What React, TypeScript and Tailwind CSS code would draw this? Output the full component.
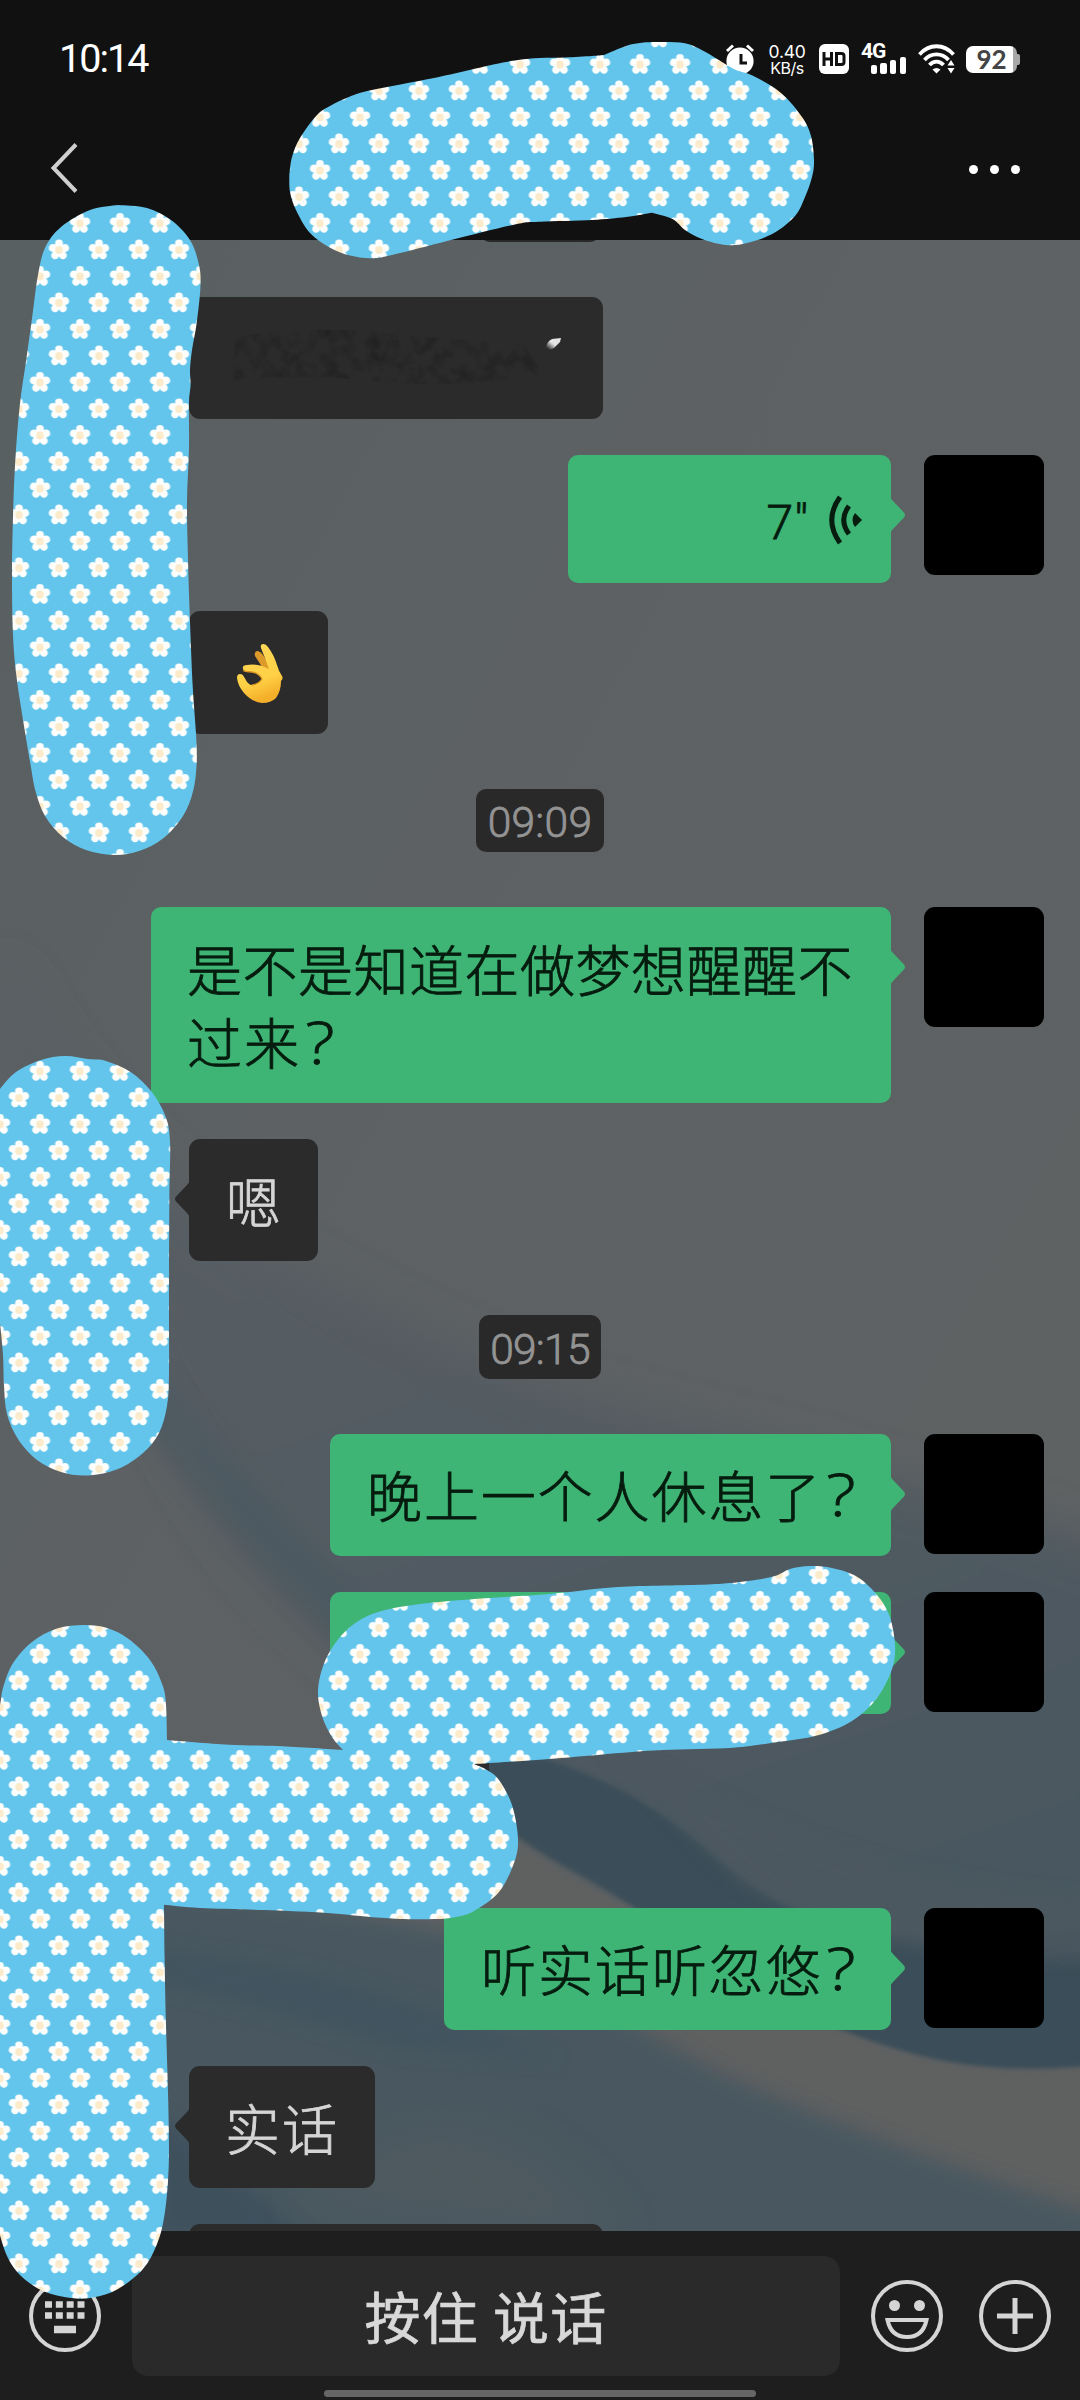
import type { ReactNode } from "react";

type Pt = [number, number];

/** Smooth closed outline through a list of segments; the joints between segments stay sharp. */
function outline(segments: Pt[][]): string {
  let d = `M${segments[0][0].join(" ")}`;
  segments.forEach((p, s) => {
    if (s > 0) d += ` L${p[0].join(" ")}`;
    for (let i = 0; i < p.length - 1; i++) {
      const a = p[Math.max(i - 1, 0)];
      const b = p[i];
      const c = p[i + 1];
      const e = p[Math.min(i + 2, p.length - 1)];
      const r = (n: number) => n.toFixed(1);
      d += ` C${r(b[0] + (c[0] - a[0]) / 6)} ${r(b[1] + (c[1] - a[1]) / 6)} ${r(c[0] - (e[0] - b[0]) / 6)} ${r(c[1] - (e[1] - b[1]) / 6)} ${c[0]} ${c[1]}`;
    }
  });
  return d + "Z";
}

const titleStroke: Pt[][] = [
  [[289.3, 175], [292, 157], [300, 138], [317, 115], [330, 106], [350, 96.5], [372, 90], [434, 78], [496, 64], [518, 60], [540, 58], [565, 57.5], [592, 56], [604, 55]],
  [[604, 55], [626, 46], [640, 43], [657, 42], [685, 43.3], [705, 51.7], [722, 62], [736, 70], [753.5, 76], [781, 93], [802, 117], [811, 136], [814, 160], [812, 177], [805, 197], [795, 216], [774, 233], [747, 243], [726, 245], [702, 239], [685, 230], [672.6, 219], [652, 212.7]],
  [[652, 212.7], [626, 217], [592, 220], [540, 221.7], [517, 224], [455, 239], [392, 255], [371, 258.2], [350, 255.5], [330.6, 248], [310, 233], [296, 210], [290, 192], [289.3, 175]],
];

const upperLeftStroke: Pt[][] = [
  [[118, 205], [90, 210], [61, 227], [45, 248], [38, 275], [32.6, 314], [26.5, 358], [19.6, 407], [15, 466], [12.7, 528], [12, 582], [13, 635], [16.3, 675], [22.4, 716], [30.6, 765], [35.5, 791], [45, 816], [63, 837], [86, 850], [114, 855], [139, 851], [163, 838.5], [183, 816], [193, 791.6], [196.7, 763], [196, 733.6], [192.6, 684.5], [190, 622], [188, 559.5], [187, 501], [189, 448], [189, 403], [190.6, 385], [190, 370], [192, 350], [196.7, 323], [200.4, 287], [199, 265], [190, 240], [171, 220], [147, 208], [118, 205]],
];

const middleLeftStroke: Pt[][] = [
  [[-8, 1100], [0, 1089], [16, 1072], [41, 1060], [65, 1056], [88, 1059], [106, 1061], [130.6, 1072], [151, 1091], [165, 1115], [170, 1141], [169.4, 1196], [169, 1290], [169, 1374], [167, 1406], [159, 1433], [143, 1453], [118, 1469], [88, 1475.5], [61, 1472], [37, 1460], [18, 1439], [7, 1414], [4, 1386], [3, 1354.5], [0, 1323]],
  [[-8, 1310], [-8, 1100]],
];

const lowerStroke: Pt[][] = [
  [[-8, 1730], [0, 1705], [3, 1688], [12.5, 1664], [32, 1642], [57, 1628.6], [84, 1625], [107, 1628], [128.6, 1639], [150, 1660], [162.5, 1685], [166, 1705], [167, 1740]],
  [[167, 1740], [228.6, 1744.7], [278.6, 1746], [343, 1750]],
  [[343, 1750], [332, 1737], [322, 1716], [318, 1690], [325, 1661], [340, 1637], [360, 1620], [389.5, 1609], [449, 1601], [549, 1594], [618, 1587], [708, 1584.5], [748, 1581], [775, 1576], [790, 1569], [810, 1566], [832, 1568], [857, 1576.7], [877, 1595], [889.5, 1616], [895, 1645], [892, 1669], [877, 1698], [852, 1721], [817, 1735.5], [777.5, 1742], [733, 1747.8], [663, 1750], [623, 1752.7], [549, 1759], [474, 1764]],
  [[474, 1764], [487, 1770], [499, 1780], [512, 1805], [518, 1839], [514, 1863], [499, 1892], [474, 1911], [456, 1917], [437.5, 1919], [400, 1919], [368, 1916.8], [321, 1912.6], [264, 1910], [200, 1908], [164, 1904.8]],
  [[164, 1904.8], [164.6, 1956.6], [166, 2024.6], [168, 2092.5], [169, 2145], [168, 2181.5], [164, 2218], [157, 2244], [143, 2269], [118, 2289], [93, 2297.6], [71, 2298], [43, 2291], [21, 2276], [7, 2256], [-3, 2225]],
  [[-8, 2210], [-8, 1730]],
];

function Flower({ x, y }: { x: number; y: number }) {
  return (
    <g transform={`translate(${x} ${y})`}>
      {[0, 72, 144, 216, 288].map((a) => (
        <ellipse key={a} cx="0" cy="-6.200" rx="3.900" ry="4.200" fill="#fefffc" transform={`rotate(${a})`} />
      ))}
      <circle r="3.900" fill="#fcebcb" />
    </g>
  );
}

function Stickers() {
  return (
    <svg className="pointer-events-none absolute inset-0" width="1080" height="2400" viewBox="0 0 1080 2400">
      <defs>
        <pattern id="daisies" width="40" height="53" patternUnits="userSpaceOnUse" patternTransform="translate(9.5 0)">
          <rect width="40" height="53" fill="#64c5ec" />
          <Flower x={30.5} y={11.5} />
          <Flower x={-9.5} y={11.5} />
          <Flower x={9.5} y={38} />
          <Flower x={49.5} y={38} />
        </pattern>
      </defs>
      {[titleStroke, upperLeftStroke, middleLeftStroke, lowerStroke].map((s, i) => (
        <path key={i} d={outline(s)} fill="url(#daisies)" />
      ))}
    </svg>
  );
}

function Wallpaper() {
  return (
    <svg className="absolute inset-0" width="1080" height="1991" viewBox="0 240 1080 1991">
      <defs>
        <linearGradient id="sky" x1="0" y1="0" x2="1" y2="1">
          <stop offset="0" stopColor="#586062" />
          <stop offset="0.35" stopColor="#5d6163" />
          <stop offset="1" stopColor="#606263" />
        </linearGradient>
        <linearGradient id="ridge" x1="0" y1="0" x2="0.35" y2="1">
          <stop offset="0" stopColor="#5b6063" />
          <stop offset="0.5" stopColor="#535b62" />
          <stop offset="1" stopColor="#4a5860" />
        </linearGradient>
        <filter id="b24" x="-20%" y="-20%" width="140%" height="140%"><feGaussianBlur stdDeviation="24" /></filter>
        <filter id="b10" x="-20%" y="-20%" width="140%" height="140%"><feGaussianBlur stdDeviation="9" /></filter>
        <filter id="b2"><feGaussianBlur stdDeviation="2.5" /></filter>
      </defs>
      <rect y="240" width="1080" height="1991" fill="url(#sky)" />
      <path d="M0 960 C120 1200 330 1290 480 1360 S800 1440 1140 1560 L1140 2060 C900 2060 760 1980 640 1900 S380 1680 300 1610 S100 1330 0 1020Z" fill="url(#ridge)" filter="url(#b24)" />
      <path d="M160 1370 C260 1500 380 1620 520 1730 L540 1800 C400 1720 220 1540 140 1420Z" fill="#4a5861" opacity="0.6" filter="url(#b10)" />
      <path d="M480 1745 C640 1770 700 1850 760 1890 S960 1960 1100 1925 L1100 2066 C980 2078 920 2060 840 2030 S700 1950 630 1905 S520 1850 480 1800Z" fill="#3b4e59" filter="url(#b2)" />
      <path d="M600 1740 C760 1830 900 1890 1100 1900 L1100 1960 C960 1960 860 1950 740 1880Z" fill="#4d5961" opacity="0.8" filter="url(#b10)" />
      <path d="M440 1840 L500 1835 Q570 1880 630 1908 C780 2010 900 2090 1100 2066 L1100 2230 C900 2160 700 2080 440 2010Z" fill="#5e6061" filter="url(#b2)" />
      <path d="M-20 1860 C160 1890 330 1905 440 1930 S640 2040 760 2090 S960 2170 1100 2215 L1100 2260 L-20 2260Z" fill="#4a5860" filter="url(#b10)" />
      <path d="M150 1950 C300 1960 420 2000 560 2060 L400 2050 C300 2020 220 1995 150 1985Z" fill="#40525e" opacity="0.7" filter="url(#b10)" />
      <path d="M150 2110 C220 2150 260 2200 310 2240 L150 2240Z" fill="#3e505d" opacity="0.8" filter="url(#b10)" />
      <path d="M300 2200 C420 2080 520 2120 620 2240Z" fill="#535c61" opacity="0.6" filter="url(#b24)" />
    </svg>
  );
}

function StatusBar() {
  return (
    <div className="flex h-[118px] items-center justify-between pl-[59px] pr-[60px] text-white">
      <div className="font-[Roboto] text-[39.5px] leading-none tracking-[-2px]">10:14</div>
      <div className="flex items-center">
        <svg width="30" height="32" viewBox="0 0 30 32" className="mr-[13px]">
          <circle cx="15" cy="18" r="13.6" fill="#fff" />
          <path d="M2 8 L8 2.5 M22 2.5 L28 8" stroke="#fff" strokeWidth="3" />
          <path d="M16 11 V20 H22" stroke="#111" strokeWidth="3" fill="none" />
        </svg>
        <div className="mr-[13px] w-[38px] text-center font-[Inter]">
          <div className="text-[17.5px] leading-[17px] tracking-[-0.3px]">0.40</div>
          <div className="text-[16px] leading-[16px] tracking-[-0.5px]">KB/s</div>
        </div>
        <div className="flex h-[30px] w-[30px] items-center justify-center rounded-[6px] bg-white">
          <svg width="24" height="14" viewBox="0 0 24 14" fill="none" stroke="#111" strokeWidth="3">
            <path d="M2 0V14M9.5 0V14M2 7H9.5M14.5 1.5V12.5M13 1.5H19.5Q22 1.5 22 4V10Q22 12.5 19.5 12.5H13" />
          </svg>
        </div>
        <div className="relative ml-[12px] h-[30px] w-[46px]">
          <div className="absolute -top-px left-0 font-[Roboto] text-[21px] leading-[17px] font-bold tracking-[-1px]">4G</div>
          <div className="absolute right-px bottom-0 flex items-end gap-[3.2px]">
            <i className="h-[9px] w-[6.4px] rounded-[2px] bg-white" />
            <i className="h-[11px] w-[6.4px] rounded-[2px] bg-white" />
            <i className="h-[14px] w-[6.4px] rounded-[2px] bg-white" />
            <i className="h-[17px] w-[6.4px] rounded-[2px] bg-white" />
          </div>
        </div>
        <svg width="38" height="30" viewBox="0 0 38 30" className="ml-[11px]" fill="none" stroke="#fff" strokeWidth="3.8">
          <path d="M1.5 10.5 C11 -0.5 26 -0.5 35.500 10.5" />
          <path d="M6.500 16 C13 8.500 24 8.500 30.500 16" />
          <path d="M11.500 21 C15.500 16.500 21.500 16.500 25.500 21" />
          <path d="M18.500 29.500 L14.500 25.500 Q18.500 22.500 22.500 25.500Z" fill="#fff" stroke="none" />
          <path d="M29.500 21.500 L33 16 L36.500 21.500Z M29.500 24 L33 29.500 L36.500 24Z" fill="#fff" stroke="none" />
        </svg>
        <div className="ml-[10px] flex items-center">
          <div className="flex h-[27px] w-[51px] items-center justify-center rounded-[7px] bg-[linear-gradient(90deg,#fff_0_47px,#a8a8a8_47px)] font-[Lato] text-[26px] leading-none font-bold text-[#444]">92</div>
          <div className="h-[11px] w-[3px] rounded-r-[2px] bg-[#a8a8a8]" />
        </div>
      </div>
    </div>
  );
}

function TimePill({ children, className }: { children?: ReactNode; className: string }) {
  return (
    <div className={`flex shrink-0 items-center justify-center self-center rounded-[10px] bg-[#292929] pt-[6px] font-[Roboto] text-[42.5px] leading-none font-light text-[#939393] [-webkit-text-stroke:0.8px] ${className}`}>
      {children}
    </div>
  );
}

function Sent({ children, className }: { children?: ReactNode; className: string }) {
  return (
    <div className="flex shrink-0 items-start justify-end pr-9">
      <div className={`relative flex items-center rounded-[10px] bg-[#3fb575] text-[#051c0e] ${className}`}>
        {children}
        <svg className="absolute top-[41px] -right-[15px]" width="16" height="38" viewBox="0 0 16 38">
          <path d="M0 0 Q1 3 3 5 L13.500 16 Q16.500 19 13.500 22 L3 33 Q1 35 0 38Z" fill="#3fb575" />
        </svg>
      </div>
      <div className="ml-[33px] size-[120px] rounded-[11px] bg-black" />
    </div>
  );
}

function Received({ children, className }: { children?: ReactNode; className: string }) {
  return (
    <div className="flex shrink-0 pl-[189px]">
      <div className={`relative flex items-center rounded-[11px] bg-[#2b2b2b] text-[#d5d5d5] ${className}`}>
        <svg className="absolute top-[41px] -left-[15px]" width="16" height="38" viewBox="0 0 16 38">
          <path d="M16 0 Q15 3 13 5 L2.500 16 Q-0.500 19 2.500 22 L13 33 Q15 35 16 38Z" fill="#2b2b2b" />
        </svg>
        {children}
      </div>
    </div>
  );
}

function QuestionMark() {
  return <span className="ml-[7px] inline-block scale-x-[1.2] font-['Open_Sans'] text-[58px] leading-[60px] font-light [-webkit-text-stroke:0.8px]">?</span>;
}

function OkHand() {
  return (
    <svg width="50" height="64" viewBox="0 0 50 64" className="mt-[5px] ml-[3px]">
      <defs>
        <linearGradient id="skin" x1="0" y1="0" x2="0.3" y2="1">
          <stop offset="0" stopColor="#ffd95c" />
          <stop offset="0.7" stopColor="#fed045" />
          <stop offset="1" stopColor="#f5b02a" />
        </linearGradient>
      </defs>
      <path d="M20 13 Q19 8 23 8 Q26 9 28 12 L37 27 L29 27Z" fill="#dc9a2a" />
      <path d="M26 5 Q25 1 28.500 1 Q31 1 33 4 Q39 12 42 22 Q44 29 47 33 Q48.500 36 46 38 Q46 48 41 55 Q36 60 27 60 Q17 59 9 50 Q3 43 2 35 Q2 31 5 31 Q8 31 9 34 L14 40 Q21 42 26 36 Q23 30 16 29 Q9 29 8 26 Q7 22 12 22 Q22 20 34 26 Q30 15 26 5Z" fill="url(#skin)" />
      <path d="M9 32 Q11 29 17 29 Q24 31 27 36 Q24 41 16 42 Q11 40 9 32Z" fill="#2b2b2b" />
      <path d="M8 27.500 Q11 29 17 29 Q24 30 27 36 Q24 41 17 42" fill="none" stroke="#dc9420" strokeWidth="1.300" />
    </svg>
  );
}

function ErasedText() {
  return (
    <svg className="absolute top-[28px] left-[36px]" width="330" height="70" viewBox="0 0 330 70">
      <defs>
        <filter id="grain" colorInterpolationFilters="sRGB">
          <feTurbulence type="fractalNoise" baseFrequency="0.07" numOctaves="3" seed="7" />
          <feColorMatrix values="0 0 0 0 0.1  0 0 0 0 0.1  0 0 0 0 0.1  2.4 0 0 0 -1" />
          <feComposite in2="SourceGraphic" operator="in" />
        </filter>
      </defs>
      <path d="M10 12 Q80 0 160 8 T300 20 L318 50 Q230 64 150 56 T8 56Z" filter="url(#grain)" opacity="0.5" />
    </svg>
  );
}

export default function App() {
  return (
    <div className="relative flex h-[2400px] w-[1080px] flex-col overflow-hidden bg-[#1e1e1e] font-['Noto_Sans_CJK_SC',sans-serif]">
      <header className="h-[240px] shrink-0 bg-[#111111]">
        <StatusBar />
        <div className="flex items-center justify-between pt-[23px] pr-[60px] pl-[49px]">
          <svg width="32" height="54" viewBox="0 0 32 54" fill="none" stroke="#cfcfcf" strokeWidth="4">
            <path d="M27 3.500 L4.500 27 L27 50.500" />
          </svg>
          <div className="mt-0.5 flex gap-[12px]">
            <i className="size-[9px] rounded-full bg-white" />
            <i className="size-[9px] rounded-full bg-white" />
            <i className="size-[9px] rounded-full bg-white" />
          </div>
        </div>
      </header>

      <main className="relative h-[1991px] shrink-0 overflow-hidden">
        <Wallpaper />
        <div className="relative flex flex-col text-[55px] leading-[73px] font-light tracking-[1.9px] [-webkit-text-stroke:0.8px]">
          <TimePill className="-mt-[62px] h-[64px] w-[120px]" />
          <div className="h-[55px] shrink-0" />
          <Received className="h-[122px] w-[414px]">
            <ErasedText />
            <svg className="absolute top-[38px] left-[355px]" width="20" height="18" viewBox="0 0 20 18">
              <defs>
                <linearGradient id="smudge" x1="0" y1="1" x2="1" y2="0">
                  <stop offset="0.1" stopColor="#2b2b2b" />
                  <stop offset="0.5" stopColor="#e4e4e4" />
                </linearGradient>
              </defs>
              <path d="M2 14 Q2 7 8 4 L17 3 L16 7 L10 13 Q5 16 2 14Z" fill="url(#smudge)" />
            </svg>
          </Received>
          <div className="h-[36px] shrink-0" />
          <Sent className="h-[128px] w-[323px] justify-end pr-[27px]">
            <span className="mt-[8px] mr-[19px] font-[Roboto] text-[48px] leading-none font-light tracking-[1px]">7"</span>
            <svg width="36" height="50" viewBox="0 0 36 50" fill="none" stroke="#051c0e" strokeWidth="5" className="mt-px">
              <path d="M12 2 Q-4.500 25 12 48" />
              <path d="M21 11 Q10.500 25 21 39" />
              <path d="M27 18 L34 25 L27 32 Q22 25 27 18Z" fill="#051c0e" stroke="none" />
            </svg>
          </Sent>
          <div className="h-[28px] shrink-0" />
          <Received className="h-[123px] w-[139px] justify-center">
            <OkHand />
          </Received>
          <div className="h-[55px] shrink-0" />
          <TimePill className="h-[63px] w-[128px] tracking-[0.3px]">09:09</TimePill>
          <div className="h-[55px] shrink-0" />
          <Sent className="h-[196px] w-[740px] pl-[36px]">
            <div className="-mt-0.5">
              <div className="h-[73px] tracking-[0.5px] whitespace-nowrap">是不是知道在做梦想醒醒不</div>
              <div className="h-[73px] whitespace-nowrap">过来<QuestionMark /></div>
            </div>
          </Sent>
          <div className="h-[36px] shrink-0" />
          <Received className="h-[122px] w-[129px] pb-[2px] pl-[37px]">嗯</Received>
          <div className="h-[54px] shrink-0" />
          <TimePill className="h-[64px] w-[122px] tracking-[-0.7px]">09:15</TimePill>
          <div className="h-[55px] shrink-0" />
          <Sent className="h-[122px] w-[561px] pb-[3px] pl-[37px] whitespace-nowrap">晚上一个人休息了<QuestionMark /></Sent>
          <div className="h-[36px] shrink-0" />
          <Sent className="h-[122px] w-[561px]" />
          <div className="h-[36px] shrink-0" />
          <Received className="h-[122px] w-[300px]" />
          <div className="h-[36px] shrink-0" />
          <Sent className="h-[122px] w-[447px] pb-[3px] pl-[37px] whitespace-nowrap">听实话听忽悠<QuestionMark /></Sent>
          <div className="h-[36px] shrink-0" />
          <Received className="h-[122px] w-[186px] pb-[2px] pl-[36px]">实话</Received>
          <div className="h-[36px] shrink-0" />
          <Received className="h-[122px] w-[414px]" />
        </div>
      </main>

      <footer className="flex flex-1 flex-col items-center">
        <div className="mt-[25px] flex h-[120px] w-full items-center pl-[29px]">
          <svg width="72" height="72" viewBox="0 0 72 72" fill="none" stroke="#d5d5d5" strokeWidth="4">
            <circle cx="36" cy="36" r="34" />
            <path d="M16 24.500H55.500M16 35.500H55.500" strokeWidth="6.500" strokeDasharray="7 3.830" />
            <path d="M25 49.500H47" strokeWidth="7.500" />
          </svg>
          <div className="ml-[31px] flex h-[120px] w-[708px] items-center justify-center rounded-[16px] bg-[#2a2a2a] pb-[3px] text-[56px] leading-none font-normal tracking-[1.3px] text-[#d8d8d8] [-webkit-text-stroke:0.7px]">
            按住 说话
          </div>
          <svg className="ml-[31px]" width="72" height="72" viewBox="0 0 72 72" fill="none" stroke="#d5d5d5" strokeWidth="4">
            <circle cx="36" cy="36" r="34" />
            <circle cx="23.500" cy="25.500" r="5.500" fill="#d5d5d5" stroke="none" />
            <circle cx="48.500" cy="25.500" r="5.500" fill="#d5d5d5" stroke="none" />
            <path d="M16.500 40H55.500Q52 57 36 57T16.500 40Z" />
          </svg>
          <svg className="ml-[36px]" width="72" height="72" viewBox="0 0 72 72" fill="none" stroke="#d5d5d5" strokeWidth="4">
            <circle cx="36" cy="36" r="34" />
            <path d="M36 18V54M18 36H54" strokeWidth="5" />
          </svg>
        </div>
        <div className="mt-[14px] h-[7px] w-[432px] rounded-full bg-[#666666]" />
      </footer>

      <Stickers />
    </div>
  );
}
